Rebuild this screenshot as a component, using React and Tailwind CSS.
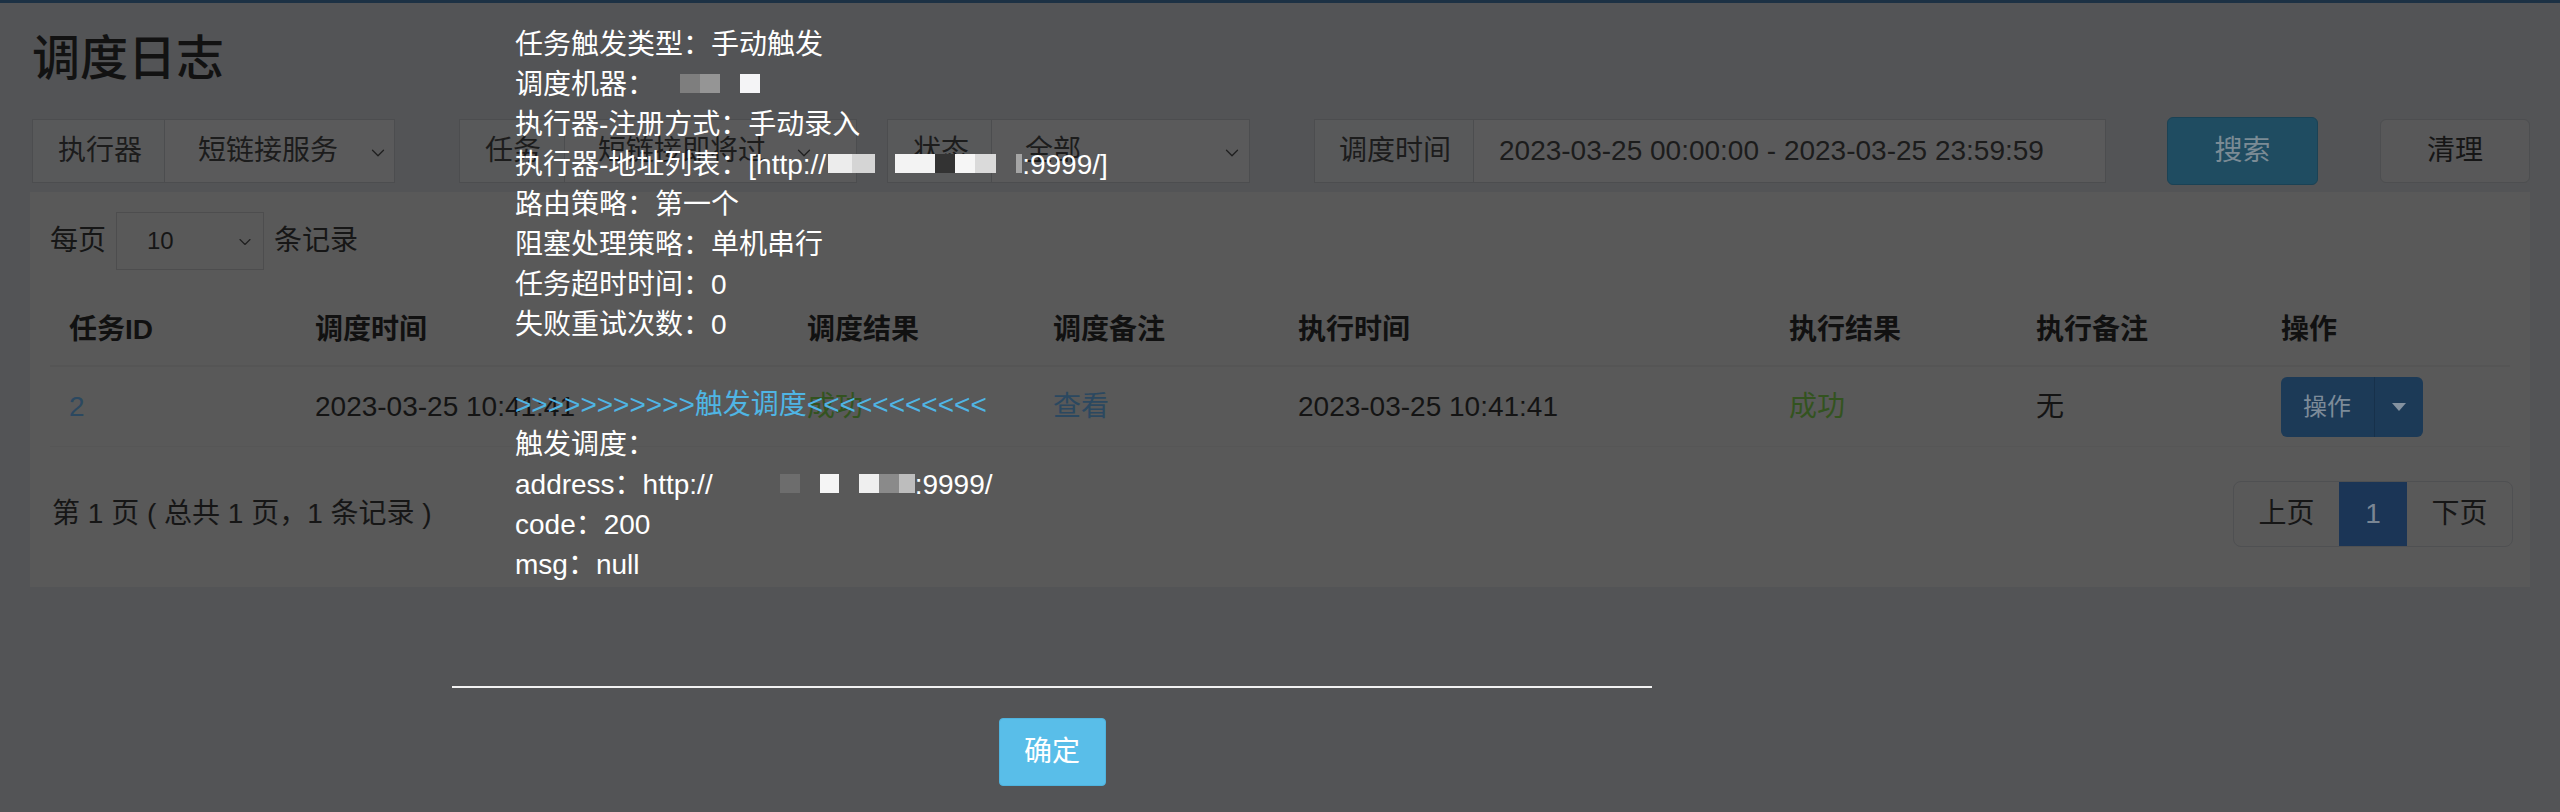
import React from "react";
import { ChevronDown } from "lucide-react";

const FONT = "font-['Liberation_Sans','Noto_Sans_CJK_SC',sans-serif]";

const COLS = "grid grid-cols-[246px_492px_246px_245px_491px_247px_245px_1fr]";

const HEADERS = ["任务ID", "调度时间", "调度结果", "调度备注", "执行时间", "执行结果", "执行备注", "操作"];

// pixelated blocks that hide the ip addresses in the modal text
const Blocks = ({ items }) => (
  <>
    {items.map(([ml, w, color], i) => (
      <span
        key={i}
        className="inline-block h-[19px] align-middle relative top-[-3px]"
        style={{ marginLeft: ml, width: w, background: color }}
      />
    ))}
  </>
);

const Addon = ({ w, pl = "pl-[25px]", children }) => (
  <div className={`${w} h-[64px] flex items-center ${pl} bg-[#58595a] border border-[#4c4d4f] text-[#1c1c1c] text-[28px]`}>
    {children}
  </div>
);

const FakeSelect = ({ w, pl, chevronRight, clip, children }) => (
  <div className={`${w} h-[64px] relative flex items-center ${pl} bg-[#5a5a5b] border border-l-0 border-[#4c4d4f] text-[#1c1c1c] text-[28px]`}>
    <span className={`${clip} overflow-hidden whitespace-nowrap`}>{children}</span>
    <ChevronDown
      className={`absolute ${chevronRight} top-[22px] w-[22px] h-[22px] text-[#202020]`}
      strokeWidth={1.4}
    />
  </div>
);

export default function App() {
  return (
    <div className={`relative w-[2560px] h-[812px] overflow-hidden bg-[#535456] ${FONT}`}>
      <div className="h-[3px] bg-[#1c3144]" />

      <section className="px-[30px]">
        <h1 className="mt-[32px] ml-[2px] text-[48px] leading-[48px] font-medium text-[#121212]">调度日志</h1>

        {/* filters */}
        <div className="mt-[34px] ml-[2px] flex items-center">
          <div className="flex">
            <Addon w="w-[133px]">执行器</Addon>
            <FakeSelect w="w-[230px]" pl="pl-[33px]" chevronRight="right-[5px]" clip="">短链接服务</FakeSelect>
          </div>
          <div className="flex ml-[64px]">
            <Addon w="w-[106px]">任务</Addon>
            <FakeSelect w="w-[292px]" pl="pl-[33px]" chevronRight="right-[41px]" clip="w-[168px]">短链接即将过期提醒</FakeSelect>
          </div>
          <div className="flex ml-[30px]">
            <Addon w="w-[105px]">状态</Addon>
            <FakeSelect w="w-[258px]" pl="pl-[33px]" chevronRight="right-[6px]" clip="">全部</FakeSelect>
          </div>
          <div className="flex ml-[64px]">
            <Addon w="w-[160px]" pl="pl-[24px]">调度时间</Addon>
            <div className="w-[632px] h-[64px] flex items-center pl-[25px] bg-[#5a5a5b] border border-l-0 border-[#4c4d4f] text-[#1c1c1c] text-[28px]">
              2023-03-25 00:00:00 - 2023-03-25 23:59:59
            </div>
          </div>
          <button className="ml-[61px] w-[152px] h-[68px] rounded-[6px] bg-[#1f4c61] border border-[#1a4255] text-[#7b8b95] text-[28px]">
            搜索
          </button>
          <button className="ml-[62px] w-[151px] h-[64px] rounded-[6px] bg-[#585859] border border-[#4d4e50] text-[#161616] text-[28px]">
            清理
          </button>
        </div>

        {/* log table box */}
        <div className="mt-[7px] h-[395px] bg-[#595959] px-[20px] pt-[20px]">
          <div className="flex items-center h-[58px] text-[28px] text-[#161616]">
            <span>每页</span>
            <div className="relative ml-[10px] w-[148px] h-[58px] flex items-center pl-[30px] border border-[#4d4d4e] text-[24px]">
              10
              <ChevronDown className="absolute right-[8px] top-[19px] w-[20px] h-[20px] text-[#202020]" strokeWidth={1.4} />
            </div>
            <span className="ml-[10px]">条记录</span>
          </div>

          <div className={`${COLS} mt-[25px] h-[72px] items-center border-b-2 border-[#555555] text-[28px] font-bold text-[#111111]`}>
            {HEADERS.map((h) => (
              <div key={h} className="pl-[19px]">{h}</div>
            ))}
          </div>

          <div className={`${COLS} h-[80px] items-center border-b border-[#565656] text-[28px] text-[#141414]`}>
            <div className="pl-[19px] text-[#2b4860]">2</div>
            <div className="pl-[19px]">2023-03-25 10:41:41</div>
            <div className="pl-[19px] text-[#33531f]">成功</div>
            <div className="pl-[19px] text-[#2b4860]">查看</div>
            <div className="pl-[19px]">2023-03-25 10:41:41</div>
            <div className="pl-[19px] text-[#33531f]">成功</div>
            <div className="pl-[19px]">无</div>
            <div className="pl-[19px]">
              <div className="flex w-[142px] h-[60px] rounded-[6px] bg-[#1c3a57] overflow-hidden">
                <div className="w-[94px] flex items-center pl-[22px] text-[24px] text-[#7d8b99] border-r border-[#17314b]">操作</div>
                <div className="flex-1 flex items-center justify-center">
                  <span className="w-0 h-0 border-l-[7px] border-r-[7px] border-t-[8px] border-l-transparent border-r-transparent border-t-[#8492a0]" />
                </div>
              </div>
            </div>
          </div>

          <div className="mt-[34px] flex items-center justify-between">
            <span className="ml-[2px] text-[28px] text-[#161616]">第 1 页 ( 总共 1 页，1 条记录 )</span>
            <div className="mr-[-3px] flex h-[66px] rounded-[8px] border border-[#4f5052] overflow-hidden text-[28px]">
              <div className="w-[105px] flex items-center justify-center text-[#161616]">上页</div>
              <div className="w-[68px] flex items-center justify-center bg-[#1b3556] text-[#7a8694]">1</div>
              <div className="w-[105px] flex items-center justify-center text-[#161616]">下页</div>
            </div>
          </div>
        </div>
      </section>

      {/* trigger message dialog */}
      <div className="absolute left-[452px] top-0 w-[1200px]">
        <div className="pl-[63px] pt-[25px] text-white text-[28px] leading-[40px] whitespace-nowrap">
          <div>任务触发类型：手动触发</div>
          <div>
            调度机器：
            <Blocks items={[[25, 20, "#7e7e7e"], [0, 20, "#959595"], [20, 20, "#f4f4f6"]]} />
          </div>
          <div>执行器-注册方式：手动录入</div>
          <div>
            执行器-地址列表：[http://
            <Blocks
              items={[
                [2, 24, "#ececec"],
                [0, 23, "#d5d5d5"],
                [20, 40, "#f3f3f3"],
                [0, 20, "#333333"],
                [0, 20, "#f6f6f6"],
                [0, 21, "#dadada"],
                [20, 6, "#a5a5a5"],
              ]}
            />
            :9999/]
          </div>
          <div>路由策略：第一个</div>
          <div>阻塞处理策略：单机串行</div>
          <div>任务超时时间：0</div>
          <div>失败重试次数：0</div>
          <div className="h-[40px]" />
          <div className="text-[#4fb5e4]">{">>>>>>>>>>>触发调度<<<<<<<<<<<"}</div>
          <div>触发调度：</div>
          <div>
            address：http://
            <Blocks
              items={[
                [67, 20, "#6d6d6d"],
                [20, 19, "#f5f5f5"],
                [20, 20, "#efefef"],
                [0, 20, "#8a8a8a"],
                [0, 16, "#bdbdbd"],
              ]}
            />
            :9999/
          </div>
          <div>code：200</div>
          <div>msg：null</div>
        </div>

        <div className="mt-[101px] h-[2px] bg-[#f2f2f2]" />

        <div className="mt-[30px] flex justify-center">
          <button className="w-[107px] h-[68px] rounded-[4px] bg-[#59bee9] border border-[#4fb3de] text-white text-[28px]">
            确定
          </button>
        </div>
      </div>
    </div>
  );
}
